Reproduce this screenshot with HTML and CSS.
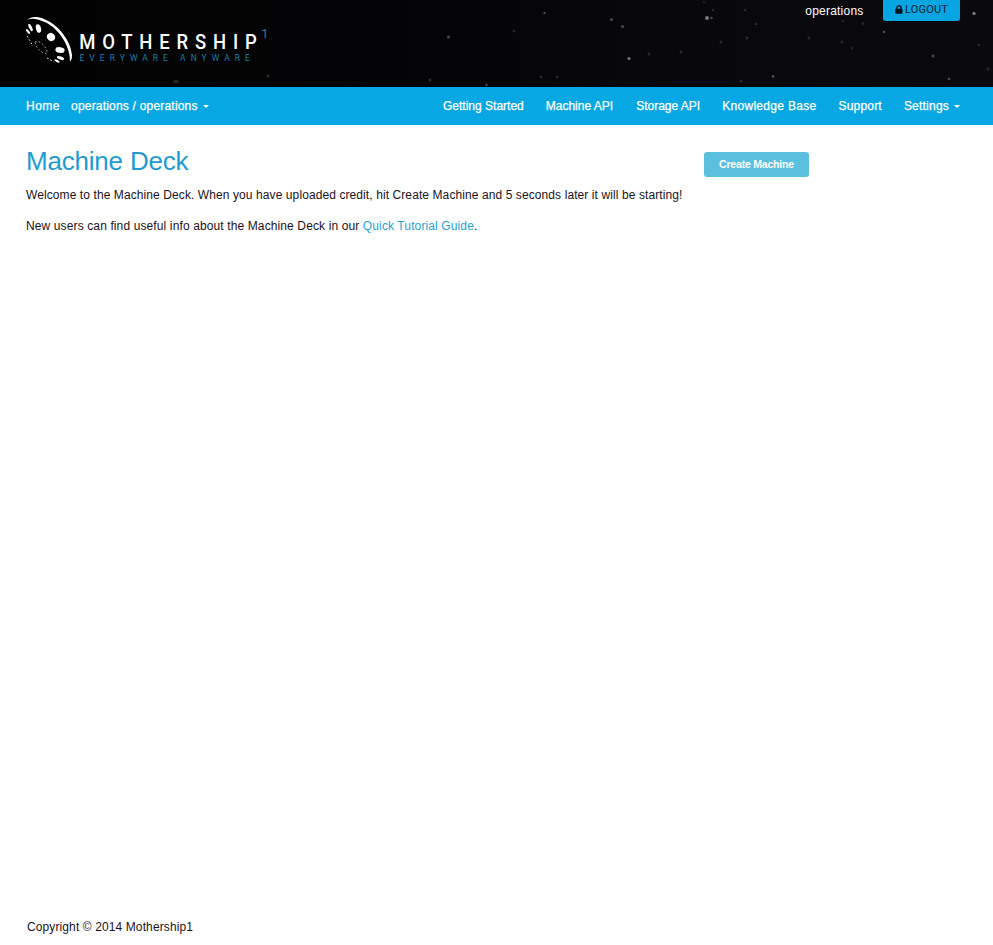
FILE: index.html
```html
<!DOCTYPE html>
<html lang="en">
<head>
<meta charset="utf-8">
<title>Machine Deck</title>
<link rel="stylesheet" href="styles.css">
</head>
<body>
<header class="header">
  <svg class="stars" width="993" height="87" viewBox="0 0 993 87" aria-hidden="true">
    <defs>
      <linearGradient id="sky"><stop offset="0" stop-color="#020203"/><stop offset=".5" stop-color="#050507"/><stop offset=".65" stop-color="#08080b"/><stop offset="1" stop-color="#0a0a0e"/></linearGradient>
    </defs>
    <rect width="993" height="87" fill="url(#sky)"/>
    <g fill="#77777b">
      <circle cx="707" cy="18" r="2"/><circle cx="974" cy="13.500" r="1.700"/><circle cx="629" cy="58.500" r="1.500"/>
    </g>
    <g fill="#4b4b4f">
      <circle cx="448.500" cy="37" r="1.500"/><circle cx="544.500" cy="13" r="1.200"/><circle cx="611.500" cy="19.500" r="1.500"/><circle cx="622.500" cy="26.500" r="1.500"/><circle cx="711.500" cy="18" r="1.200"/><circle cx="773" cy="76.500" r="1.400"/><circle cx="933" cy="56" r="1.400"/><circle cx="949" cy="79" r="1.300"/><circle cx="486.500" cy="85" r="1.200"/><circle cx="884" cy="32" r="1.300"/>
    </g>
    <g fill="#29292d">
      <ellipse cx="176" cy="81.500" rx="3" ry="1.500"/><circle cx="268" cy="76" r="1.500"/><circle cx="681" cy="52" r="1.500"/><circle cx="756" cy="24" r="1.300"/><circle cx="863" cy="23.500" r="1.200"/><circle cx="514" cy="31" r="1.500"/><circle cx="430" cy="80" r="1.500"/><circle cx="541" cy="77" r="1.300"/><circle cx="557" cy="77" r="1.300"/><circle cx="721" cy="42" r="1.500"/><circle cx="747" cy="38" r="1.500"/><circle cx="649" cy="54" r="1.500"/><circle cx="745" cy="10" r="1.300"/><circle cx="713" cy="10" r="1.200"/><circle cx="809" cy="38" r="1.500"/><circle cx="842" cy="42" r="1.500"/><circle cx="852" cy="48" r="1.200"/><circle cx="843" cy="21" r="1.200"/><circle cx="741" cy="81" r="1.400"/><circle cx="979" cy="45" r="1.300"/><circle cx="704" cy="2" r="1"/><circle cx="988" cy="69" r="1.500"/>
    </g>
  </svg>
  <svg class="logo" width="250" height="56" viewBox="20 12 250 56" role="img" aria-label="Mothership1">
    <g fill="#fff">
      <path d="M27.500 19.500C31 16.500 37 16 44 19C58 24.500 70.500 40 72 55C72 58 71.500 60.500 70 61.500C70.700 48 60 29.500 46 22.500C38 18.500 32 17.800 27.500 19.500Z"/>
      <ellipse cx="38.500" cy="28.500" rx="2.500" ry="4.400" transform="rotate(-15 38.500 28.500)"/>
      <ellipse cx="51" cy="37" rx="3.900" ry="4.200" transform="rotate(-40 51 37)"/>
      <ellipse cx="60" cy="50" rx="4.700" ry="2.900" transform="rotate(10 60 50)"/>
      <ellipse cx="30.500" cy="27.500" rx="1.400" ry="4" transform="rotate(-27 30.500 27.500)"/>
      <ellipse cx="28" cy="31.500" rx="1.100" ry="2.900" transform="rotate(-40 28 31.500)"/>
      <ellipse cx="60.500" cy="58" rx="3.800" ry="1.500" transform="rotate(20 60.500 58)"/>
      <ellipse cx="57" cy="61" rx="2.900" ry="1.100" transform="rotate(25 57 61)"/>
    </g>
    <g fill="none" stroke="#ddd" stroke-dasharray="1.800 2">
      <path d="M27 36L33 46"/><path d="M47 58L54 62"/>
      <path d="M35 42C40 39 48 49 47 53C44 55 36 49 35 42" stroke="#aaa" stroke-width=".9"/>
    </g>
    <text class="logo-name" transform="translate(79.200 49) scale(.88 1)">MOTHERSHI<tspan class="logo-end">P</tspan></text>
    <text class="logo-one" x="261.500" y="38">1</text>
    <text class="logo-tag" x="79.500" y="61">EVERYWARE ANYWARE</text>
  </svg>
  <div class="account">
    <span class="user">operations</span>
    <a class="logout"><svg class="lock" width="8" height="9" viewBox="0 0 8 9"><path d="M2 4V2.800a2 2 0 0 1 4 0V4" fill="none" stroke="#03131c" stroke-width="1.400"/><rect x=".3" y="3.800" width="7.200" height="4.900" rx=".6" fill="#03131c"/></svg><span>LOGOUT</span></a>
  </div>
</header>
<nav class="nav">
  <div class="nav-group">
    <a class="home">Home</a>
    <a class="space">operations / operations<i class="caret"></i></a>
  </div>
  <div class="nav-group nav-right">
    <a>Getting Started</a>
    <a class="machine">Machine API</a>
    <a>Storage API</a>
    <a class="kb">Knowledge Base</a>
    <a class="support">Support</a>
    <a class="settings">Settings<i class="caret"></i></a>
  </div>
</nav>
<main class="main">
  <div class="intro">
    <h1>Machine Deck</h1>
    <p class="welcome">Welcome to the Machine Deck. When you have uploaded credit, hit Create Machine and 5 seconds later it will be starting!</p>
    <p class="guide">New users can find useful info about the Machine Deck in our <a>Quick Tutorial Guide</a>.</p>
  </div>
  <button class="create">Create Machine</button>
</main>
<footer class="footer"><span>Copyright © 2014 Mothership1</span></footer>
</body>
</html>
```
FILE: styles.css
```css
* { box-sizing: border-box; }
body { margin: 0; height: 945px; display: flex; flex-direction: column; overflow: hidden; background: #fff; color: #1b1220; font: 12px/16px "Liberation Sans", Arial, sans-serif; }
.header { position: relative; height: 87px; flex: none; display: flex; justify-content: space-between; align-items: flex-start; padding: 0 33px 0 20px; background: #050507; }
.stars { position: absolute; left: 0; top: 0; }
.logo { position: relative; margin-top: 12px; }
.logo-name { font: 500 21px Roboto, sans-serif; letter-spacing: 7.750px; fill: #fff; }
.logo-end { letter-spacing: 0; }
.logo-one { font: 12px Roboto, sans-serif; fill: #1b88b5; }
.logo-tag { font: 8.500px Roboto, sans-serif; letter-spacing: 5.020px; fill: #1480ad; }
.account { position: relative; display: flex; align-items: flex-start; gap: 19.500px; }
.user { color: #fff; padding-top: 3px; letter-spacing: .22px; }
.logout { display: flex; align-items: center; justify-content: center; gap: 2px; width: 77px; height: 21px; padding-bottom: 2px; border-radius: 0 0 3px 3px; background: #07a6e2; color: #03202e; font: 11px/14px Roboto, sans-serif; letter-spacing: .15px; }
.lock { margin: -1px 0 0; }
.nav { height: 38px; flex: none; display: flex; justify-content: space-between; padding: 0 33px 0 26px; background: #07a7e3; color: #fff; line-height: 38px; -webkit-text-stroke: .25px #fff; }
.nav-group { display: flex; gap: 11px; }
.nav-right { gap: 22px; }
.nav a { white-space: nowrap; }
.home { letter-spacing: .5px; }
.space { letter-spacing: .2px; }
.machine { margin-right: 1px; }
.kb { letter-spacing: .3px; }
.support { letter-spacing: .2px; }
.settings { letter-spacing: .22px; }
.caret { display: inline-block; margin-left: 5px; vertical-align: 2px; border: 3px solid transparent; border-top-color: #fff; border-bottom: 0; }
.main { flex: 1; display: flex; align-items: flex-start; gap: 22px; padding: 20px 26px 0; }
.intro { width: 656px; }
h1 { margin: 0; font-size: 26px; line-height: 32px; font-weight: 400; letter-spacing: -.2px; color: #1f9bd0; }
p { margin: 10px 0 15px; white-space: nowrap; }
.welcome { letter-spacing: .092px; }
.guide { letter-spacing: .12px; }
.guide a { color: #2a9fd0; }
.create { margin: 7px 0 0; width: 105px; height: 25px; padding: 0 0 2px; border: 0; border-radius: 3px; background: #5bc0de; color: #fff; font: bold 10.500px "Liberation Sans", Arial, sans-serif; letter-spacing: -.2px; white-space: nowrap; }
.footer { height: 26px; padding: 0 27px; flex: none; letter-spacing: .11px; }
```
